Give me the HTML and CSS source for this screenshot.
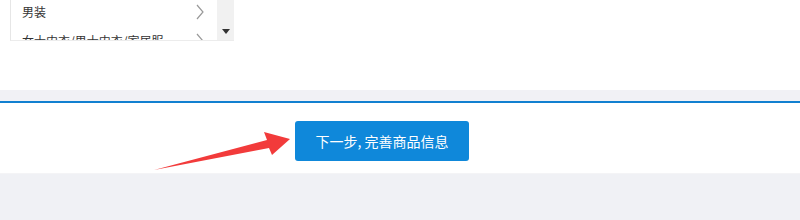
FILE: index.html
```html
<!DOCTYPE html>
<html lang="zh">
<head>
<meta charset="utf-8">
<link rel="stylesheet" href="styles.css">
</head>
<body>
<div class="top">
  <div class="listbox">
    <ul class="list">
      <li class="item"><span>男装</span><svg class="chev" width="10" height="16" viewBox="0 0 10 16"><polyline points="2,1 8,8 2,15" fill="none" stroke="#999" stroke-width="1.2"/></svg></li>
      <li class="item"><span>女士内衣/男士内衣/家居服</span><svg class="chev" width="10" height="16" viewBox="0 0 10 16"><polyline points="2,1 8,8 2,15" fill="none" stroke="#999" stroke-width="1.2"/></svg></li>
    </ul>
    <div class="scrollbar"><span class="down"></span></div>
  </div>
</div>
<div class="band"></div>
<div class="actions">
  <button class="next">下一步, 完善商品信息</button>
  <svg class="arrow" width="800" height="220" viewBox="0 0 800 220">
    <polygon points="154,170 267,140 264,132 290,139 272,155 269,148" fill="#f23b3b"/>
  </svg>
</div>
<div class="bottom"></div>
</body>
</html>
```
FILE: styles.css
```css
html, body { margin: 0; padding: 0; }
body {
  width: 800px;
  height: 220px;
  overflow: hidden;
  background: #fff;
  font-family: "Microsoft YaHei", "Noto Sans CJK SC", sans-serif;
  position: relative;
}
.top {
  height: 90px;
  background: #fff;
}
.listbox {
  margin-left: 10px;
  width: 223px;
  height: 40px;
  border-left: 1px solid #e6e6e6;
  border-bottom: 1px solid #ececec;
  overflow: hidden;
  display: flex;
  position: relative;
}
.list {
  list-style: none;
  margin: -3px 0 0 0;
  padding: 0;
  width: 206px;
}
.item {
  height: 29px;
  display: flex;
  align-items: center;
  justify-content: space-between;
  padding-left: 11px;
  padding-right: 12px;
  font-size: 12px;
  color: #333;
}
.chev { display: block; }
.scrollbar {
  width: 17px;
  height: 40px;
  background: #f1f1f1;
  position: relative;
}
.down {
  position: absolute;
  left: 5px;
  top: 29px;
  width: 0;
  height: 0;
  border-left: 4px solid transparent;
  border-right: 4px solid transparent;
  border-top: 5px solid #333;
}
.band {
  height: 11px;
  background: #f1f1f5;
  border-bottom: 2px solid #1180d0;
}
.actions {
  height: 70px;
  padding: 0;
  display: flex;
  align-items: flex-start;
}
.next {
  margin: 18px 0 0 295px;
  width: 174px;
  height: 40px;
  border: none;
  border-radius: 3px;
  background: #0f88da;
  color: #fff;
  font-family: "Microsoft YaHei", "Noto Sans CJK SC", sans-serif;
  font-size: 14px;
  padding: 0;
}
.arrow {
  position: absolute;
  left: 0;
  top: 0;
  pointer-events: none;
}
.bottom {
  height: 47px;
  background: #f0f1f5;
  border-top: 1px solid #f4f4f6;
}
```
